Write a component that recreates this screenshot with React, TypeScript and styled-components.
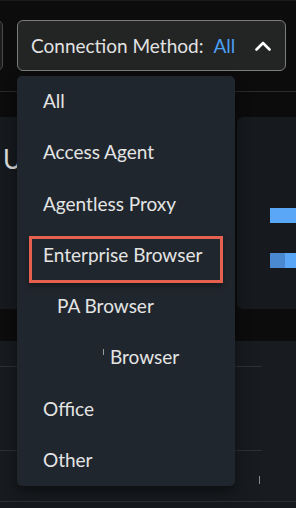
import React from "react";
import styled, { createGlobalStyle } from "styled-components";

const Global = createGlobalStyle`
  html, body { margin: 0; padding: 0; background: #0c0c0c; }
  body { font-family: Lato, "Noto Sans", sans-serif; }
  * { box-sizing: border-box; }
`;

const Page = styled.div`
  position: relative;
  width: 296px;
  height: 508px;
  overflow: hidden;
  background: #0c0c0c;
  border-top: 1px solid #1c1c1c;
`;

const Header = styled.div`
  height: 91px;
  display: flex;
  align-items: flex-start;
  gap: 14px;
  padding-top: 19px;
  border-bottom: 1px solid #2a2a2a;
`;

const StubButton = styled.div`
  width: 43px;
  height: 51px;
  margin-left: -40px;
  border: 1px solid #4a4a4a;
  border-radius: 6px;
  background: #1c1c1c;
`;

const SelectButton = styled.div`
  width: 269px;
  height: 51px;
  border: 1px solid #7c7c7c;
  border-radius: 6px;
  background: #232424;
  display: flex;
  align-items: center;
  justify-content: space-between;
  padding: 0 14px 0 13px;
  font-size: 19px;
  color: #e2e2e2;
`;

const Label = styled.span`
  white-space: nowrap;
`;

const Value = styled.span`
  color: #4b9ff3;
  margin-left: 10px;
`;

const Band = styled.div<{ $h: number }>`
  height: ${(p) => p.$h}px;
  background: #0c0c0c;
`;

const CardRow = styled.div`
  height: 192px;
  display: grid;
  grid-template-columns: 235px 1fr;
  gap: 2px;
`;

const Card = styled.div<{ $radius?: string }>`
  background: #161a1e;
  border-radius: ${(p) => p.$radius || "0"};
  overflow: hidden;
  position: relative;
`;

const CardTitle = styled.div`
  padding: 26px 0 0 3px;
  font-size: 26px;
  color: #dcdcdc;
  white-space: nowrap;
`;

const Bars = styled.div`
  display: flex;
  flex-direction: column;
  gap: 30px;
  padding: 91px 0 0 33px;
`;

const BarTrack = styled.div`
  height: 15px;
  display: flex;
`;

const BarSeg = styled.div<{ $color: string; $w?: number }>`
  background: ${(p) => p.$color};
  ${(p) => (p.$w ? `width: ${p.$w}px;` : "flex: 1;")}
`;

const Lower = styled.div`
  height: 161px;
  display: grid;
  grid-template-columns: 262px 1fr;
  border-bottom: 1px solid #2a2f34;
`;

const LowerLeft = styled.div`
  background: #171b1f;
  display: grid;
  grid-template-rows: 26px 84px 1fr;
`;

const LowerRow = styled.div<{ $line?: boolean }>`
  border-bottom: ${(p) => (p.$line ? "1px solid #2b3035" : "none")};
  display: flex;
  justify-content: flex-end;
  align-items: flex-start;
`;

const Caret = styled.div`
  width: 1px;
  height: 8px;
  margin: 25px 2px 0 0;
  background: #8a8a8a;
`;

const LowerRight = styled.div`
  background: #181c20;
`;

const Foot = styled.div`
  height: 6px;
  background: #161a1e;
`;

const Menu = styled.div`
  position: absolute;
  left: 17px;
  top: 75px;
  width: 218px;
  height: 410px;
  background: #20262d;
  border-radius: 5px;
  box-shadow: 0 6px 14px rgba(0, 0, 0, 0.45);
  display: flex;
  flex-direction: column;
`;

const Item = styled.div<{ $indent?: number }>`
  height: 51.25px;
  display: flex;
  align-items: center;
  padding-left: ${(p) => 26 + (p.$indent || 0)}px;
  padding-bottom: 2px;
  font-size: 19px;
  color: #e4e4e4;
  white-space: nowrap;
`;

const Mark = styled.span`
  display: inline-block;
  width: 1px;
  height: 6px;
  background: #9a9a9a;
  margin: 0 6px 9px 0;
`;

const Highlight = styled.div`
  position: absolute;
  left: 12px;
  top: 160px;
  width: 194px;
  height: 47px;
  border: 3px solid #e6604f;
  box-shadow: 0 3px 6px rgba(0, 0, 0, 0.35);
  pointer-events: none;
`;

const Chevron = () => (
  <svg width="16" height="10" viewBox="0 0 16 10">
    <polyline
      points="1.5,8.5 8,2 14.5,8.5"
      fill="none"
      stroke="#ffffff"
      strokeWidth="2.6"
      strokeLinecap="round"
      strokeLinejoin="round"
    />
  </svg>
);

const items: { label: string; indent?: number; mark?: boolean }[] = [
  { label: "All" },
  { label: "Access Agent" },
  { label: "Agentless Proxy" },
  { label: "Enterprise Browser" },
  { label: "PA Browser", indent: 14 },
  { label: "Browser", indent: 60, mark: true },
  { label: "Office" },
  { label: "Other" },
];

export default function App() {
  return (
    <>
      <Global />
      <Page>
        <Header>
          <StubButton />
          <SelectButton>
            <Label>
              Connection Method:<Value>All</Value>
            </Label>
            <Chevron />
          </SelectButton>
        </Header>
        <Band $h={25} />
        <CardRow>
          <Card $radius="0 6px 6px 0">
            <CardTitle>Users</CardTitle>
          </Card>
          <Card $radius="6px 0 0 6px">
            <Bars>
              <BarTrack>
                <BarSeg $color="#5aa6f7" />
              </BarTrack>
              <BarTrack>
                <BarSeg $color="#4a88d0" $w={15} />
                <BarSeg $color="#5aa6f7" />
              </BarTrack>
            </Bars>
          </Card>
        </CardRow>
        <Band $h={32} />
        <Lower>
          <LowerLeft>
            <LowerRow $line />
            <LowerRow $line />
            <LowerRow>
              <Caret />
            </LowerRow>
          </LowerLeft>
          <LowerRight />
        </Lower>
        <Foot />
        <Menu>
          {items.map((it) => (
            <Item key={it.label + (it.indent || 0)} $indent={it.indent}>
              {it.mark && <Mark />}
              {it.label}
            </Item>
          ))}
          <Highlight />
        </Menu>
      </Page>
    </>
  );
}
